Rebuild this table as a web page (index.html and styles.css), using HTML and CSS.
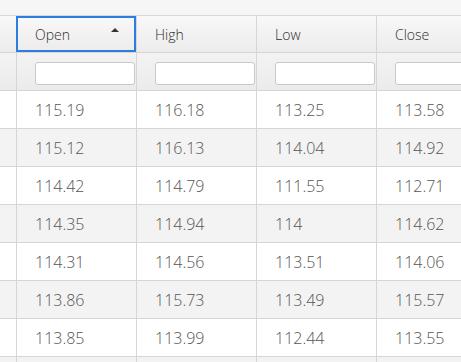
FILE: index.html
```html
<!DOCTYPE html>
<html lang="en">
<head>
  <meta charset="UTF-8">
  <meta name="viewport" content="width=device-width, initial-scale=1.0">
  <title>Quotes grid</title>
  <link rel="stylesheet" href="styles.css">
</head>
<body>
  <div class="grid">
    <!-- strip above the headers -->
    <div class="top-strip"></div>

    <!-- column headers -->
    <div class="row header-row">
      <div class="cell lead"></div>
      <div class="cell head focused">
        <span>Open</span>
        <span class="sort-asc"></span>
      </div>
      <div class="cell head"><span>High</span></div>
      <div class="cell head"><span>Low</span></div>
      <div class="cell head"><span>Close</span></div>
    </div>

    <!-- filters -->
    <div class="row filter-row">
      <div class="cell lead"></div>
      <div class="cell"><input type="text" class="filter"></div>
      <div class="cell"><input type="text" class="filter"></div>
      <div class="cell"><input type="text" class="filter"></div>
      <div class="cell"><input type="text" class="filter"></div>
    </div>

    <!-- data -->
    <div class="row data-row">
      <div class="cell lead"></div>
      <div class="cell">115.19</div><div class="cell">116.18</div><div class="cell">113.25</div><div class="cell">113.58</div>
    </div>
    <div class="row data-row alt">
      <div class="cell lead"></div>
      <div class="cell">115.12</div><div class="cell">116.13</div><div class="cell">114.04</div><div class="cell">114.92</div>
    </div>
    <div class="row data-row">
      <div class="cell lead"></div>
      <div class="cell">114.42</div><div class="cell">114.79</div><div class="cell">111.55</div><div class="cell">112.71</div>
    </div>
    <div class="row data-row alt">
      <div class="cell lead"></div>
      <div class="cell">114.35</div><div class="cell">114.94</div><div class="cell">114</div><div class="cell">114.62</div>
    </div>
    <div class="row data-row">
      <div class="cell lead"></div>
      <div class="cell">114.31</div><div class="cell">114.56</div><div class="cell">113.51</div><div class="cell">114.06</div>
    </div>
    <div class="row data-row alt">
      <div class="cell lead"></div>
      <div class="cell">113.86</div><div class="cell">115.73</div><div class="cell">113.49</div><div class="cell">115.57</div>
    </div>
    <div class="row data-row">
      <div class="cell lead"></div>
      <div class="cell">113.85</div><div class="cell">113.99</div><div class="cell">112.44</div><div class="cell">113.55</div>
    </div>
    <!-- next row, only its top edge shows -->
    <div class="row data-row alt">
      <div class="cell lead"></div>
      <div class="cell"></div><div class="cell"></div><div class="cell"></div><div class="cell"></div>
    </div>
  </div>
</body>
</html>
```

FILE: styles.css
```css
* {
  margin: 0;
  padding: 0;
  box-sizing: border-box;
}
body {
  font-family: 'Open Sans', sans-serif;
  background: #fff;
  overflow: hidden;
}

.grid {
  width: 461px;
  height: 362px;
  overflow: hidden;
}

/* strip above the headers */
.top-strip {
  height: 16px;
  background: #f6f6f6;
  border-bottom: 1px solid #d9d9d9;
}

/* rows and cells */
.row {
  display: flex;
  border-bottom: 1px solid #d6d6d6;
}
.cell {
  flex: 0 0 120px;
  min-width: 0;
  display: flex;
  align-items: center;
  padding: 0 18px;
  border-left: 1px solid #d6d6d6;
  white-space: nowrap;
}
.cell.lead {
  flex-basis: 16px;
  border-left: none;
  padding: 0;
}

/* column headers */
.header-row {
  height: 37px;
  background: linear-gradient(#f8f8f8, #ececec);
}
.head {
  font-size: 14px;
  font-weight: 300;
  color: #2e2e2e;
  justify-content: space-between;
  padding-right: 17px;
}
.head.focused {
  outline: 2px solid #2b7de1;
  outline-offset: -2px;
}
.sort-asc {
  width: 0;
  height: 0;
  border-left: 4px solid transparent;
  border-right: 4px solid transparent;
  border-bottom: 4px solid #333;
  margin-top: -9px;
}

/* filters */
.filter-row {
  height: 38px;
  background: linear-gradient(#f3f3f3, #ebebeb);
}
.filter-row .cell {
  padding-right: 0;
  padding-top: 4px;
}
.filter {
  flex: 0 0 100px;
  width: 100px;
  height: 23px;
  border: 1px solid #c8c8c8;
  border-radius: 3px;
  background: #fff;
  font-family: inherit;
  font-size: 13px;
  padding: 0 4px;
}

/* data */
.data-row {
  height: 38px;
  font-size: 16px;
  font-weight: 300;
  color: #555;
  background: #fff;
}
.data-row.alt {
  background: #f3f3f3;
}
```
